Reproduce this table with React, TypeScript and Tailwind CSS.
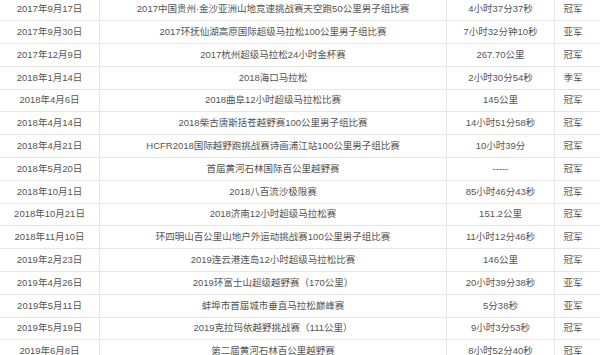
import React from "react";

// Rows: date, race, result, rank
const rows: [string, string, string, string][] = [
    ["2017年9月17日", "2017中国贵州·金沙亚洲山地竞速挑战赛天空跑50公里男子组比赛", "4小时37分37秒", "冠军"],
    ["2017年9月30日", "2017环抚仙湖高原国际超级马拉松100公里男子组比赛", "7小时32分钟10秒", "亚军"],
    ["2017年12月9日", "2017杭州超级马拉松24小时金杯赛", "267.70公里", "冠军"],
    ["2018年1月14日", "2018海口马拉松", "2小时30分54秒", "季军"],
    ["2018年4月6日", "2018曲阜12小时超级马拉松比赛", "145公里", "冠军"],
    ["2018年4月14日", "2018柴古唐斯括苍越野赛100公里男子组比赛", "14小时51分58秒", "冠军"],
    ["2018年4月21日", "HCFR2018国际越野跑挑战赛诗画浦江站100公里男子组比赛", "10小时39分", "冠军"],
    ["2018年5月20日", "首届黄河石林国际百公里越野赛", "-----", "冠军"],
    ["2018年10月1日", "2018八百流沙极限赛", "85小时46分43秒", "冠军"],
    ["2018年10月21日", "2018济南12小时超级马拉松赛", "151.2公里", "冠军"],
    ["2018年11月10日", "环四明山百公里山地户外运动挑战赛100公里男子组比赛", "11小时12分46秒", "冠军"],
    ["2019年2月23日", "2019连云港连岛12小时超级马拉松比赛", "146公里", "冠军"],
    ["2019年4月26日", "2019环富士山超级越野赛（170公里）", "20小时39分38秒", "亚军"],
    ["2019年5月11日", "蚌埠市首届城市垂直马拉松巅峰赛", "5分38秒", "亚军"],
    ["2019年5月19日", "2019克拉玛依越野挑战赛（111公里）", "9小时3分53秒", "冠军"],
    ["2019年6月8日", "第二届黄河石林百公里越野赛", "8小时52分40秒", "冠军"],
];

const App = () => {
    return (
        <div
            className="w-[600px] h-[355px] overflow-hidden bg-white text-[#555] text-[9.5px]"
            style={{ fontFamily: '"Liberation Sans", "Noto Sans CJK SC", sans-serif' }}
        >
            <div className="-mt-[1.5px]">
                {rows.map((row, index) => (
                    <div
                        key={index}
                        className="grid grid-cols-[100px_347px_108px_36px] h-[22.8px] border-b border-[#e6e6e6]"
                    >
                        <div className="flex items-center justify-center border-r border-[#e6e6e6] whitespace-nowrap">
                            {row[0]}
                        </div>
                        <div className="flex items-center justify-center border-r border-[#e6e6e6] whitespace-nowrap">
                            {row[1]}
                        </div>
                        <div className="flex items-center justify-center border-r border-[#e6e6e6] whitespace-nowrap">
                            {row[2]}
                        </div>
                        <div className="flex items-center justify-center whitespace-nowrap">{row[3]}</div>
                    </div>
                ))}
            </div>
        </div>
    );
};

export default App;
